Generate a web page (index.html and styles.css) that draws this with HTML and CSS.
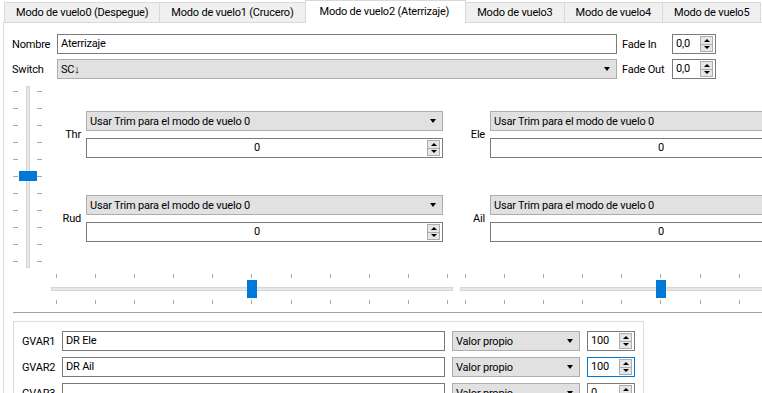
FILE: index.html
```html
<!DOCTYPE html>
<html lang="es">
<head>
    <meta charset="UTF-8">
    <meta name="viewport" content="width=device-width, initial-scale=1.0">
    <title>Modos de vuelo</title>
    <link rel="stylesheet" href="styles.css">
</head>
<body>
    <div class="tabs">
        <div class="tab">Modo de vuelo0 (Despegue)</div>
        <div class="tab">Modo de vuelo1 (Crucero)</div>
        <div class="tab active">Modo de vuelo2 (Aterrizaje)</div>
        <div class="tab">Modo de vuelo3</div>
        <div class="tab">Modo de vuelo4</div>
        <div class="tab">Modo de vuelo5</div>
    </div>

    <div class="pane">
        <!-- name / switch / fades -->
        <div class="head-grid">
            <div class="label">Nombre</div>
            <div class="field">Aterrizaje</div>
            <div class="label fade-label">Fade In</div>
            <div class="spin"><span class="val">0,0</span><span class="btns"><i class="up"></i><i class="down"></i></span></div>

            <div class="label">Switch</div>
            <div class="combo">SC↓</div>
            <div class="label fade-label">Fade Out</div>
            <div class="spin"><span class="val">0,0</span><span class="btns"><i class="up"></i><i class="down"></i></span></div>
        </div>

        <!-- trims -->
        <div class="trims">
            <div class="vslider">
                <div class="vticks">
                    <i></i><i></i><i></i><i></i><i></i><i></i><i></i><i></i><i></i><i></i><i></i>
                </div>
                <div class="vtrack"></div>
                <div class="vhandle"></div>
            </div>

            <div class="trim-grid">
                <div class="trim-label">Thr</div>
                <div class="trim-cell">
                    <div class="combo">Usar Trim para el modo de vuelo 0</div>
                    <div class="spin centered"><span class="val">0</span><span class="btns"><i class="up"></i><i class="down"></i></span></div>
                </div>
                <div class="trim-label">Ele</div>
                <div class="trim-cell">
                    <div class="combo">Usar Trim para el modo de vuelo 0</div>
                    <div class="spin centered"><span class="val">0</span><span class="btns"><i class="up"></i><i class="down"></i></span></div>
                </div>

                <div class="trim-label">Rud</div>
                <div class="trim-cell">
                    <div class="combo">Usar Trim para el modo de vuelo 0</div>
                    <div class="spin centered"><span class="val">0</span><span class="btns"><i class="up"></i><i class="down"></i></span></div>
                </div>
                <div class="trim-label">Ail</div>
                <div class="trim-cell">
                    <div class="combo">Usar Trim para el modo de vuelo 0</div>
                    <div class="spin centered"><span class="val">0</span><span class="btns"><i class="up"></i><i class="down"></i></span></div>
                </div>
            </div>
        </div>

        <div class="hsliders">
            <div class="hslider">
                <div class="hticks">
                    <i></i><i></i><i></i><i></i><i></i><i></i><i></i><i></i><i></i><i></i><i></i>
                </div>
                <div class="htrack"></div>
                <div class="hhandle"></div>
            </div>
            <div class="hslider">
                <div class="hticks">
                    <i></i><i></i><i></i><i></i><i></i><i></i><i></i><i></i><i></i><i></i><i></i>
                </div>
                <div class="htrack"></div>
                <div class="hhandle"></div>
            </div>
        </div>

        <div class="separator"></div>

        <!-- global vars -->
        <div class="gvars">
            <div class="label">GVAR1</div>
            <div class="field">DR Ele</div>
            <div class="combo">Valor propio</div>
            <div class="spin"><span class="val">100</span><span class="btns"><i class="up"></i><i class="down"></i></span></div>

            <div class="label">GVAR2</div>
            <div class="field">DR Ail</div>
            <div class="combo">Valor propio</div>
            <div class="spin focus"><span class="val">100</span><span class="btns"><i class="up"></i><i class="down"></i></span></div>

            <div class="label">GVAR3</div>
            <div class="field"></div>
            <div class="combo">Valor propio</div>
            <div class="spin"><span class="val">0</span><span class="btns"><i class="up"></i><i class="down"></i></span></div>
        </div>
    </div>
</body>
</html>
```

FILE: styles.css
```css
* {
    box-sizing: border-box;
}

body {
    margin: 0;
    width: 762px;
    height: 393px;
    overflow: hidden;
    background: #fff;
    font-family: Roboto, "Liberation Sans", Arial, sans-serif;
    font-size: 11px;
    letter-spacing: -0.2px;
    color: #000;
}

/* tab bar */
.tabs {
    display: flex;
    align-items: flex-end;
    height: 22px;
    padding-left: 4px;
    white-space: nowrap;
    position: relative;
    z-index: 1;
}

.tab {
    height: 20px;
    line-height: 20px;
    padding: 0 11px;
    background: #f0f0f0;
    border: 1px solid #d9d9d9;
    border-bottom: none;
    margin-right: -1px;
}

.tab.active {
    height: 23px;
    line-height: 22px;
    padding: 0 16px 0 14px;
    margin-bottom: -1px;
    background: #fff;
}

.pane {
    margin-left: 3px;
    height: 371px;
    border-left: 1px solid #d9d9d9;
    border-top: 1px solid #d9d9d9;
    padding: 11px 0 0 8px;
}

.label {
    white-space: nowrap;
}

/* widgets */
.field {
    height: 20px;
    line-height: 18px;
    padding-left: 3px;
    border: 1px solid #7a7a7a;
    background: #fff;
    white-space: nowrap;
}

.combo {
    display: flex;
    align-items: center;
    justify-content: space-between;
    height: 20px;
    padding: 0 6px 0 3px;
    border: 1px solid #adadad;
    background: #e1e1e1;
    white-space: nowrap;
}

.combo::after {
    content: "";
    border-left: 3.5px solid transparent;
    border-right: 3.5px solid transparent;
    border-top: 4px solid #000;
}

.spin {
    display: flex;
    height: 20px;
    border: 1px solid #7a7a7a;
    background: #fff;
}

.spin.focus {
    border-color: #0078d7;
}

.spin .val {
    flex: 1;
    line-height: 18px;
    padding-left: 3px;
}

.spin.centered .val {
    text-align: center;
    padding-left: 0;
}

.btns {
    display: flex;
    flex-direction: column;
    width: 13px;
    margin: 1px 2px 1px 0;
    border: 1px solid #adadad;
    background: #e6e6e6;
}

.btns i {
    flex: 1;
    display: flex;
    align-items: center;
    justify-content: center;
}

.btns i + i {
    border-top: 1px solid #adadad;
}

.btns .up::after {
    content: "";
    border-left: 3px solid transparent;
    border-right: 3px solid transparent;
    border-bottom: 3px solid #000;
}

.btns .down::after {
    content: "";
    border-left: 3px solid transparent;
    border-right: 3px solid transparent;
    border-top: 3px solid #000;
}

/* top rows */
.head-grid {
    display: grid;
    grid-template-columns: 45px 560px 55px 44px;
    grid-auto-rows: 20px;
    row-gap: 5px;
    align-items: center;
}

.fade-label {
    padding-left: 5px;
}

/* trims */
.trims {
    display: flex;
    height: 182px;
    margin: 7px 0 0 1px;
}

.vslider {
    position: relative;
    flex: none;
    width: 30px;
}

.vticks {
    display: flex;
    flex-direction: column;
    justify-content: space-between;
    height: 100%;
    padding: 5px 0 6px;
}

.vticks i {
    height: 1px;
    background: linear-gradient(to right, #a8a8a8 0 5px, transparent 5px 24px, #a8a8a8 24px 29px, transparent 29px);
}

.vtrack {
    position: absolute;
    left: 13px;
    top: 0;
    bottom: 0;
    width: 4px;
    background: #e7e7e7;
    border: 1px solid #d6d6d6;
}

.vhandle {
    position: absolute;
    left: 6px;
    top: 85px;
    width: 18px;
    height: 10px;
    background: #0078d7;
}

.trim-grid {
    display: grid;
    grid-template-columns: 43px 357px 47px 357px;
    grid-template-rows: 47px 47px;
    row-gap: 37px;
    padding-top: 25px;
    align-items: center;
}

.trim-label {
    text-align: right;
    padding-right: 5px;
}

.trim-cell {
    display: flex;
    flex-direction: column;
    gap: 7px;
}

/* horizontal trim sliders */
.hsliders {
    display: flex;
    gap: 7px;
    margin: 4px 0 0 39px;
}

.hslider {
    position: relative;
    flex: none;
    width: 402px;
    height: 34px;
}

.hticks {
    display: flex;
    justify-content: space-between;
    padding: 2px 5px 0;
}

.hticks i {
    width: 1px;
    height: 30px;
    background: linear-gradient(#a8a8a8 0 4px, transparent 4px 26px, #a8a8a8 26px 30px);
}

.htrack {
    position: absolute;
    left: 0;
    right: 0;
    top: 15px;
    height: 4px;
    background: #e7e7e7;
    border: 1px solid #d6d6d6;
}

.hhandle {
    position: absolute;
    left: calc(50% - 5px);
    top: 8px;
    width: 10px;
    height: 18px;
    background: #0078d7;
}

.separator {
    height: 1px;
    margin: 6px 0 0 1px;
    background: #a0a0a0;
}

/* gvars box */
.gvars {
    display: grid;
    grid-template-columns: 33px 383px 128px 48px;
    grid-auto-rows: 20px;
    column-gap: 7px;
    row-gap: 6px;
    align-items: center;
    width: 631px;
    margin: 8px 0 0 1px;
    padding: 9px 0 0 8px;
    border: 1px solid #dcdcdc;
}
```
